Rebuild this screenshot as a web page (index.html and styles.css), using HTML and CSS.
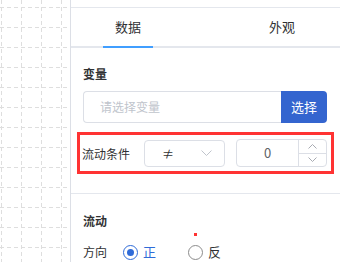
FILE: index.html
```html
<!DOCTYPE html>
<html>
<head>
  <title>Flow Properties</title>
  <link rel="stylesheet" href="styles.css">
</head>
<body>
  <div class="page">
    <!-- canvas with dashed grid -->
    <div class="canvas">
      <svg width="70" height="262" viewBox="0 0 70 262">
        <g stroke="#dedede" stroke-width="1" stroke-dasharray="4 3">
          <line x1="0" y1="7.5" x2="70" y2="7.5"/>
          <line x1="0" y1="27.5" x2="70" y2="27.5"/>
          <line x1="0" y1="47.5" x2="70" y2="47.5"/>
          <line x1="0" y1="67.5" x2="70" y2="67.5"/>
          <line x1="0" y1="87.5" x2="70" y2="87.5"/>
          <line x1="0" y1="107.5" x2="70" y2="107.5"/>
          <line x1="0" y1="127.5" x2="70" y2="127.5"/>
          <line x1="0" y1="147.5" x2="70" y2="147.5"/>
          <line x1="0" y1="167.5" x2="70" y2="167.5"/>
          <line x1="0" y1="187.5" x2="70" y2="187.5"/>
          <line x1="0" y1="207.5" x2="70" y2="207.5"/>
          <line x1="0" y1="227.5" x2="70" y2="227.5"/>
          <line x1="0" y1="247.5" x2="70" y2="247.5"/>
          <line x1="1.5" y1="0" x2="1.5" y2="262"/>
          <line x1="21.5" y1="0" x2="21.5" y2="262"/>
          <line x1="41.5" y1="0" x2="41.5" y2="262"/>
          <line x1="61.5" y1="0" x2="61.5" y2="262"/>
        </g>
      </svg>
    </div>

    <div class="panel">
      <div class="tabs">
        <div class="tab tab-data active">数据</div>
        <div class="tab tab-look">外观</div>
      </div>

      <div class="section">
        <div class="label">变量</div>
        <div class="picker">
          <div class="picker-input">请选择变量</div>
          <div class="picker-btn">选择</div>
        </div>

        <div class="cond-row">
          <span class="cond-label">流动条件</span>
          <div class="select">
            <span class="select-val">≠</span>
            <svg class="select-arrow" width="11" height="7" viewBox="0 0 11 7">
              <path d="M0.5 0.5 L5.5 5.5 L10.5 0.5" fill="none" stroke="#c0c4cc" stroke-width="1"/>
            </svg>
          </div>
          <div class="number">
            <span class="number-val">0</span>
            <div class="number-ctrl">
              <span class="ctrl">
                <svg width="9" height="5" viewBox="0 0 9 5"><path d="M0.5 4.5 L4.5 0.5 L8.5 4.5" fill="none" stroke="#a8abb2" stroke-width="1"/></svg>
              </span>
              <span class="ctrl ctrl-down">
                <svg width="9" height="5" viewBox="0 0 9 5"><path d="M0.5 0.5 L4.5 4.5 L8.5 0.5" fill="none" stroke="#a8abb2" stroke-width="1"/></svg>
              </span>
            </div>
          </div>
        </div>
      </div>

      <div class="section section-flow">
        <div class="label">流动</div>
        <div class="dir-row">
          <span class="dir-label">方向</span>
          <span class="radio checked"><span class="radio-dot"></span>正</span>
          <span class="radio"><span class="radio-dot"></span>反</span>
        </div>
      </div>

      <span class="marker"></span>
    </div>
  </div>
</body>
</html>
```

FILE: styles.css
```css
body {
  margin: 0;
  font-family: "Noto Sans CJK SC", "Noto Sans", sans-serif;
  font-size: 12px;
  color: #303133;
  background: #fff;
}

.page {
  display: flex;
  width: 340px;
  height: 262px;
  overflow: hidden;
}

.canvas {
  width: 70px;
  flex: none;
}

.canvas svg {
  display: block;
}

.panel {
  position: relative;
  flex: 1;
  border-left: 1px solid #dcdfe6;
}

/* tabs */
.tabs {
  display: flex;
  margin-top: 7px;
  height: 38px;
  border-top: 1px solid #e4e7ed;
  border-bottom: 2px solid #e4e7ed;
}

.tab {
  position: relative;
  width: 50px;
  line-height: 38px;
  text-align: center;
  font-size: 13px;
}

.tab-data {
  margin-left: 32px;
}

.tab-look {
  margin-left: 104px;
}

.tab.active::after {
  content: "";
  position: absolute;
  left: 0;
  right: 0;
  bottom: -2px;
  height: 2px;
  background-color: #409eff;
}

/* sections */
.section {
  padding: 0 13px 0 12px;
}

.label {
  margin-top: 16px;
  line-height: 20px;
  font-weight: 600;
  font-size: 12px;
}

.picker {
  display: flex;
  margin-top: 7px;
  height: 32px;
}

.picker-input {
  flex: 1;
  border: 1px solid #dcdfe6;
  border-right: none;
  border-radius: 4px 0 0 4px;
  padding-left: 16px;
  line-height: 30px;
  color: #c0c4cc;
}

.picker-btn {
  width: 46px;
  background-color: #3465cf;
  color: #fff;
  border-radius: 0 4px 4px 0;
  text-align: center;
  line-height: 32px;
  font-size: 13px;
}

.cond-row {
  display: flex;
  align-items: center;
  margin: 9px -7px 0 -6px;
  height: 36px;
  padding: 0 4px 0 2px;
  border: 3px solid #f33;
}

.cond-label {
  width: 62px;
}

.select {
  display: flex;
  align-items: center;
  justify-content: space-between;
  box-sizing: border-box;
  width: 81px;
  height: 27px;
  padding: 0 12px 0 17px;
  border: 1px solid #dcdfe6;
  border-radius: 4px;
}

.select-val {
  color: #303133;
}

.number {
  display: flex;
  box-sizing: border-box;
  width: 91px;
  height: 28px;
  margin-left: 11px;
  border: 1px solid #dcdfe6;
  border-radius: 4px;
}

.number-val {
  flex: 1;
  text-align: center;
  line-height: 26px;
  color: #606266;
  font-size: 13px;
}

.number-ctrl {
  display: flex;
  flex-direction: column;
  width: 27px;
  border-left: 1px solid #dcdfe6;
}

.ctrl {
  flex: 1;
  display: flex;
  align-items: center;
  justify-content: center;
}

.ctrl svg {
  display: block;
}

.ctrl-down {
  border-top: 1px solid #dcdfe6;
}

.section-flow {
  margin-top: 19px;
  padding-top: 1px;
  border-top: 1px solid #e4e7ed;
}

.section-flow .label {
  margin-top: 16px;
}

.dir-row {
  display: flex;
  align-items: center;
  margin-top: 11px;
  line-height: 20px;
}

.dir-label {
  width: 40px;
}

.radio {
  display: flex;
  align-items: center;
  margin-right: 32px;
  font-size: 13px;
}

.radio-dot {
  position: relative;
  box-sizing: border-box;
  width: 15px;
  height: 15px;
  margin-right: 5px;
  border: 1px solid #8c8c8c;
  border-radius: 50%;
}

.radio.checked {
  color: #2f6bd8;
}

.radio.checked .radio-dot {
  border-color: #2f6bd8;
}

.radio.checked .radio-dot::after {
  content: "";
  position: absolute;
  left: 3px;
  top: 3px;
  width: 7px;
  height: 7px;
  border-radius: 50%;
  background-color: #2f6bd8;
}

.marker {
  position: absolute;
  left: 123px;
  top: 233px;
  width: 3px;
  height: 3px;
  background-color: #f33;
}
```
